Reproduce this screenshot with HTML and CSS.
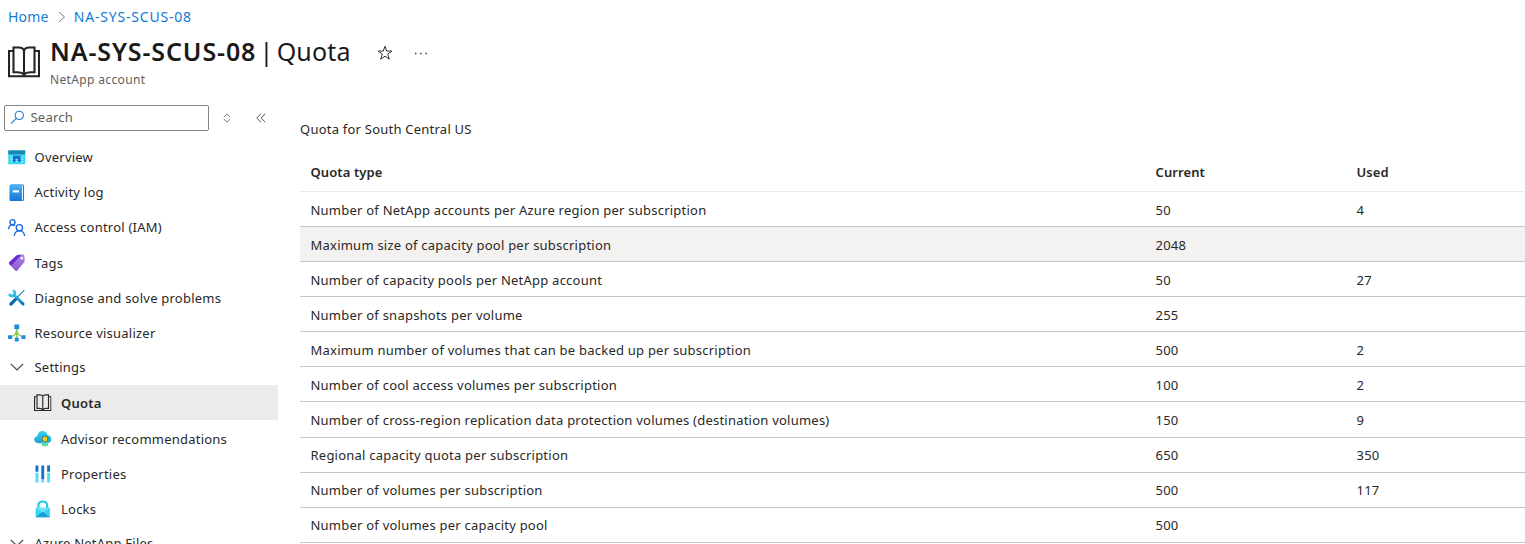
FILE: index.html
```html
<!DOCTYPE html>
<html lang="en">
<head>
<meta charset="utf-8">
<title>NA-SYS-SCUS-08 | Quota</title>
<link rel="stylesheet" href="styles.css">
</head>
<body>
<svg class="defs" width="0" height="0">
  <defs>
    <linearGradient id="blue" x1="0" y1="0" x2="0" y2="1"><stop offset="0" stop-color="#4fb0f5"/><stop offset="1" stop-color="#0f78d4"/></linearGradient>
    <linearGradient id="cyan" x1="0" y1="0" x2="0" y2="1"><stop offset="0" stop-color="#32d4f5"/><stop offset="1" stop-color="#1b9fd0"/></linearGradient>
    <linearGradient id="tool" x1="0" y1="0" x2="0" y2="1"><stop offset="0" stop-color="#32c5ee"/><stop offset="1" stop-color="#0a6cb5"/></linearGradient>
    <linearGradient id="purple" x1="0" y1="0" x2="0" y2="1"><stop offset="0" stop-color="#a98be8"/><stop offset="1" stop-color="#8a55cf"/></linearGradient>
    <symbol id="book" viewBox="0 0 32 32"><path fill="none" stroke="currentColor" stroke-width="2.100" d="M6 5H1v25.200h30V5h-5M16 4.300v24M5.500 1.500h5.300c2.600 0 4.400 1 5.200 2.800.8-1.800 2.600-2.800 5.200-2.800h5.300v24.700h-3.800c-3 0-5.400.8-6.700 2.800-1.300-2-3.700-2.800-6.700-2.800H5.500z"/></symbol>
  </defs>
</svg>
<nav class="breadcrumb">
  <a class="crumb">Home</a>
  <svg class="crumb-sep" width="8" height="12" viewBox="0 0 8 12"><path d="M1 1l5.500 5L1 11"/></svg>
  <a class="crumb crumb-account">NA-SYS-SCUS-08</a>
</nav>
<header class="header">
  <svg class="header-icon" width="32" height="32"><use href="#book"/></svg>
  <div class="header-text">
    <h1 class="title"><span class="title-name">NA-SYS-SCUS-08</span><span class="title-page"> | Quota</span></h1>
    <p class="subtitle">NetApp account</p>
  </div>
  <svg class="star" width="16" height="16" viewBox="0 0 16 16"><path d="M8 1.200l1.700 4.900h5.200l-4.200 3.100 1.600 5L8 11.200l-4.300 3 1.600-5L1.100 6.100h5.200z"/></svg>
  <svg class="dots" width="14" height="4" viewBox="0 0 14 4"><path d="M1 1.500h1.400M6.200 1.500h1.400M11.400 1.500h1.400"/></svg>
</header>
<div class="body">
  <aside class="sidebar">
    <div class="search-row">
      <div class="search">
        <svg width="15" height="15" viewBox="0 0 15 15"><path fill="none" stroke="#1f80d5" stroke-width="1.100" d="M1 13.700l5-5M9.300 1.300a4.100 4.100 0 1 1 0 8.200 4.100 4.100 0 0 1 0-8.200z"/></svg>
        <span>Search</span>
      </div>
      <svg class="sort" width="8" height="10" viewBox="0 0 8 10"><path d="M.8 4L4 .9 7.200 4M.8 6L4 9.100 7.200 6"/></svg>
      <svg class="collapse" width="10" height="10" viewBox="0 0 10 10"><path d="M4.800.8L.8 5l4 4.200M9.200.8l-4 4.200 4 4.200"/></svg>
    </div>
    <ul class="menu">
      <li class="item"><svg class="icon" viewBox="0 0 18 18"><path fill="#35d5f2" d="M.3 2.500h17.400v14.200H.3z"/><path fill="#1986ad" d="M.3 2.500h17.400v4H.3z"/><path stroke="#a9eff9" d="M2 9h14M2 11.500h14M2 14h14"/><path fill="#0f6fcd" d="M5 8h8v6.500h-2.800V11H7.800v3.500H5z"/></svg><span>Overview</span></li>
      <li class="item"><svg class="icon" viewBox="0 0 18 18"><path fill="#1777c4" d="M3 .5h12q1.500 0 1.500 1.500v14q0 1.500-1.500 1.500H3z"/><path fill="#e5f4ff" d="M3 1.300h11.500q1 0 1 1v13.400q0 1-1 1H3z"/><path fill="url(#blue)" d="M2.500.5h11.800v17H2.500q-1-.2-1-1.500V2q0-1.300 1-1.500z"/><path fill="#fff" d="M4.800 6.500h6.500v2.200H4.800z"/></svg><span>Activity log</span></li>
      <li class="item"><svg class="icon" viewBox="0 0 18 18"><g fill="none" stroke="#1769df" stroke-width="1.400"><circle cx="4.600" cy="3.300" r="2.600"/><path d="M.7 10.500c0-3 1.700-4.500 3.900-4.500 1.200 0 2 .3 2.600.9"/><circle cx="11.700" cy="9" r="3.200"/><path d="M6.500 17.500c.2-3.700 2-5.300 5.200-5.300s5 1.600 5.400 5.300"/></g></svg><span>Access control (IAM)</span></li>
      <li class="item"><svg class="icon" viewBox="0 0 18 18"><path fill="url(#purple)" d="M9.600 1.100l5.600-.6q1.500-.1 1.600 1.300l.3 5.400q0 .8-.5 1.400l-7.200 8.600q-.8.900-1.700 0L1.300 10.500q-.9-1 0-2z"/><path fill="#6b2bd0" d="M1 8.700L9 1.300l5-.7-10 10.800-1.200.8z"/><circle cx="14.300" cy="4.300" r="1.300" fill="#fff"/></svg><span>Tags</span></li>
      <li class="item"><svg class="icon" viewBox="0 0 18 18"><path fill="none" stroke="url(#tool)" stroke-width="3" stroke-linecap="round" d="M6 6l9.500 9.500"/><path fill="none" stroke="#32bde8" stroke-width="2.500" d="M5.200 1.300c3 1.700 2.500 5.500-.5 6C3 7.500 1.800 6.500 1.400 5"/><path stroke="#2a93c9" stroke-width="1.300" d="M16.800 1.200L9 9"/><path stroke="#0a66ad" stroke-width="3.400" stroke-linecap="round" d="M7.500 11L3 15.500"/></svg><span>Diagnose and solve problems</span></li>
      <li class="item"><svg class="icon" viewBox="0 0 18 18"><path fill="none" stroke="#85cb3c" stroke-width="1.400" d="M9 5v9M9 8.500c-1 2-3 3.800-6 4.500M9 8.500c1 2 3 3.800 6 4.500"/><path fill="#218ae2" d="M6.500.5h5v5h-5zM0 11.500h4.200v4H0zM13.800 11.500H18v4h-4.200zM7 14h4v4H7z"/><circle cx="9" cy="8.700" r="1.500" fill="#85cb3c"/></svg><span>Resource visualizer</span></li>
      <li class="group"><svg class="chevron" width="14" height="8" viewBox="0 0 14 8"><path d="M.8.800L7 7 13.200.800"/></svg><span>Settings</span></li>
      <li class="item sub selected"><svg class="icon"><use href="#book"/></svg><span>Quota</span></li>
      <li class="item sub"><svg class="icon" viewBox="0 0 18 18"><path fill="url(#cyan)" d="M4.500 13.500C1.800 13.500.2 12 .2 9.800c0-1.900 1.400-3.300 3.200-3.500C3.800 3 6 1 8.800 1c2.700 0 4.600 1.700 5.100 4.200 2.300.2 3.900 1.900 3.900 4.100 0 2.500-1.700 4.200-4.200 4.200z"/><path fill="#53d7ad" d="M8.500 11h5.500l.5 6-2-1-1.200 1.500L10 16l-2 1z"/><circle cx="11.300" cy="9.200" r="3.300" fill="#327387"/><circle cx="11.300" cy="9.200" r="2.500" fill="#ffc90e"/></svg><span>Advisor recommendations</span></li>
      <li class="item sub"><svg class="icon" viewBox="0 0 18 18"><path fill="#4fdcf8" d="M1.500 8h3v10h-3zM7.500 15.800h3V18h-3zM13.500 8h3v10h-3z"/><path fill="#0f75cf" d="M1.500.5h3V7h-3zM7.500.5h3v14.300h-3zM13.500.5h3V7h-3z"/></svg><span>Properties</span></li>
      <li class="item sub"><svg class="icon" viewBox="0 0 18 18"><path fill="none" stroke="#24c6e8" stroke-width="2.200" d="M4.500 9V5.800C4.500 3 6.300 1.500 9 1.500s4.500 1.500 4.500 4.300V9"/><path fill="#35d3f3" d="M1.700 8h14.600v9.800H1.700z"/><path fill="#6fe3f9" d="M1.700 8h14.600L9 13z"/><path fill="#1b9fce" d="M1.700 17.800L9 12l7.300 5.800z"/></svg><span>Locks</span></li>
      <li class="group"><svg class="chevron" width="14" height="8" viewBox="0 0 14 8"><path d="M.8.800L7 7 13.200.800"/></svg><span>Azure NetApp Files</span></li>
    </ul>
  </aside>
  <main class="content">
    <p class="caption">Quota for South Central US</p>
    <div class="table">
      <div class="row head"><span>Quota type</span><span>Current</span><span>Used</span></div>
      <div class="row"><span>Number of NetApp accounts per Azure region per subscription</span><span>50</span><span>4</span></div>
      <div class="row hover"><span>Maximum size of capacity pool per subscription</span><span>2048</span><span></span></div>
      <div class="row"><span>Number of capacity pools per NetApp account</span><span>50</span><span>27</span></div>
      <div class="row"><span>Number of snapshots per volume</span><span>255</span><span></span></div>
      <div class="row"><span>Maximum number of volumes that can be backed up per subscription</span><span>500</span><span>2</span></div>
      <div class="row"><span>Number of cool access volumes per subscription</span><span>100</span><span>2</span></div>
      <div class="row"><span>Number of cross-region replication data protection volumes (destination volumes)</span><span>150</span><span>9</span></div>
      <div class="row"><span>Regional capacity quota per subscription</span><span>650</span><span>350</span></div>
      <div class="row"><span>Number of volumes per subscription</span><span>500</span><span>117</span></div>
      <div class="row"><span>Number of volumes per capacity pool</span><span>500</span><span></span></div>
    </div>
  </main>
</div>
</body>
</html>
```
FILE: styles.css
```css
* { box-sizing: border-box; }
body {
  margin: 0;
  height: 544px;
  overflow: hidden;
  background: #fff;
  color: #292827;
  font: 13px/18px "Noto Sans", "Open Sans", sans-serif;
  letter-spacing: .23px;
  white-space: nowrap;
}
h1, p, ul { margin: 0; padding: 0; }
svg { display: block; flex: none; }
.defs { position: absolute; }

.breadcrumb { display: flex; align-items: center; height: 33px; padding-left: 8px; font-size: 14px; color: #0f7bd4; }
.crumb-account { letter-spacing: .8px; }
.crumb-sep { margin: 0 8px 0 9px; fill: none; stroke: #777; }

.header { display: flex; height: 72px; padding-left: 8px; }
.header-icon { margin: 13px 10px 0 0; color: #252423; }
.header-text { width: 299px; }
.title { height: 38px; font-size: 25px; line-height: 37px; font-weight: 400; color: #1b1a19; }
.title-name { font-weight: 600; letter-spacing: .88px; }
.title-page { white-space: pre; word-spacing: -3.500px; letter-spacing: .2px; }
.subtitle { padding-top: 1px; font-size: 12px; line-height: 16px; letter-spacing: .35px; color: #605e5c; }
.star { margin: 12px 0 0 27.500px; fill: none; stroke: #323130; }
.dots { margin: 19px 0 0 21px; stroke: #323130; stroke-width: 1.4; }

.body { display: flex; height: 439px; }
.sidebar { width: 278px; flex: none; }
.search-row { display: flex; align-items: center; height: 26px; padding-left: 4px; }
.search { display: flex; align-items: center; gap: 6px; width: 205px; height: 26px; padding: 0 0 2px 4.500px; border: 1px solid #85827f; border-radius: 2px; color: #605e5c; }
.sort { margin-left: 14px; fill: none; stroke: #777; }
.collapse { margin-left: 24.500px; fill: none; stroke: #555; }
.menu { padding-top: 8.500px; list-style: none; }
.item { display: flex; align-items: center; gap: 9px; height: 35.200px; padding-left: 8px; }
.item.sub { padding-left: 34px; gap: 9.500px; }
.icon { width: 17.500px; height: 17.500px; }
.selected { margin-bottom: .7px; background: #edebe9; font-weight: 600; }
.group { display: flex; align-items: center; gap: 10.500px; height: 34.500px; padding: 0 0 1.500px 10px; }
.chevron { fill: none; stroke: #444; stroke-width: 1.2; }

.content { flex: 1; padding: 15px 0 0 22px; }
.caption { height: 18px; }
.table { margin-top: 15px; }
.row { display: grid; grid-template-columns: 845px 201px 1fr; align-items: center; height: 35.100px; padding: 1.300px 0 0 10.500px; border-bottom: 1px solid #c8c6c4; }
.head { height: 38.900px; padding-top: 0; border-color: #edebe9; font-weight: 600; letter-spacing: .1px; }
.hover { background: #f3f2f1; }
```
